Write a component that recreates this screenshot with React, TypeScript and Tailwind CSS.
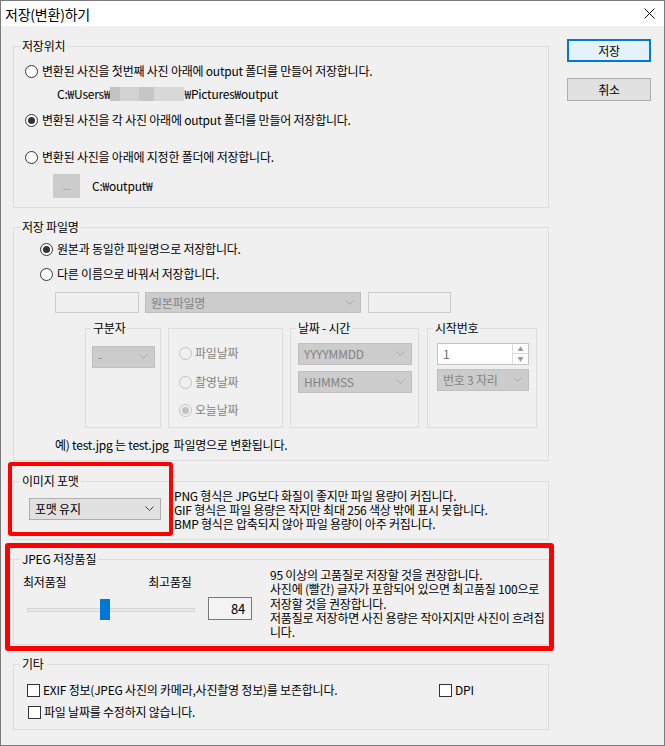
import type { ReactNode } from "react";

type RadioProps = { checked?: boolean; disabled?: boolean };

/** Win10 라디오 버튼 */
function Radio({ checked = false, disabled = false }: RadioProps) {
  return (
    <span
      className={
        disabled
          ? "flex size-[13px] shrink-0 items-center justify-center rounded-full border border-[#c2c2c2] bg-[#f0f0f0]"
          : "flex size-[13px] shrink-0 items-center justify-center rounded-full border border-[#333333] bg-white"
      }
    >
      {checked && (
        <span className={disabled ? "size-[7px] rounded-full bg-[#c2c2c2]" : "size-[7px] rounded-full bg-[#333333]"} />
      )}
    </span>
  );
}

function Checkbox() {
  return <span className="size-[13px] shrink-0 border border-[#333333] bg-white" />;
}

function Chevron({ dark = false }: { dark?: boolean }) {
  return (
    <svg width="9" height="6" viewBox="0 0 9 6" fill="none">
      <polyline points="0.5,0.5 4.5,4.5 8.5,0.5" stroke={dark ? "#3c3c3c" : "#a8a8a8"} strokeWidth="1" />
    </svg>
  );
}

function Select({ label, className = "", enabled = false }: { label: string; className?: string; enabled?: boolean }) {
  return (
    <div
      className={
        (enabled
          ? "flex h-[22px] items-center justify-between border border-[#adadad] bg-[#e1e1e1] pl-[5px] pr-[6px] text-black "
          : "flex h-[22px] items-center justify-between border border-[#bfbfbf] bg-[#cccccc] pl-[5px] pr-[6px] text-[#838383] ") +
        className
      }
    >
      <span>{label}</span>
      <Chevron dark={enabled} />
    </div>
  );
}

function Group({ title, className = "", children }: { title?: string; className?: string; children: ReactNode }) {
  return (
    <fieldset className={"border border-[#dcdcdc] " + className}>
      {title && <legend className="ml-[6px] px-[2px] leading-[16px]">{title}</legend>}
      {children}
    </fieldset>
  );
}

function SubGroup({ title, className = "", children }: { title?: string; className?: string; children: ReactNode }) {
  return (
    <fieldset className={"border border-[#dcdcdc] " + className}>
      {title && <legend className="ml-[5px] px-[2px] leading-[16px]">{title}</legend>}
      {children}
    </fieldset>
  );
}

/** 사용자명 모자이크 처리 */
function Mosaic() {
  return (
    <span className="flex h-[14px] w-[74px]">
      <span className="w-[10px] bg-[#c3c3c3]" />
      <span className="w-[19px] bg-[#d2d2d2]" />
      <span className="w-[15px] bg-[#c6c6c6]" />
      <span className="w-[30px] bg-[#d8d8d8]" />
    </span>
  );
}

export default function App() {
  return (
    <div className="relative flex h-[746px] w-[665px] flex-col overflow-hidden border border-[#7a7a7a] bg-[#f0f0f0] font-['Noto_Sans_CJK_KR',sans-serif] text-[12px] leading-[16px] tracking-[-0.22px] text-black">
      {/* 타이틀 바 */}
      <div className="flex h-[25px] shrink-0 items-center justify-between bg-white pl-[4px] pr-[9px]">
        <span className="text-[14px]">저장(변환)하기</span>
        <svg width="11" height="11" viewBox="0 0 11 11">
          <path d="M0.5 0.5 L10.5 10.5 M10.5 0.5 L0.5 10.5" stroke="#111" strokeWidth="1" />
        </svg>
      </div>

      <div className="flex">
        <div className="ml-[12px] mt-[12px] flex w-[536px] flex-col">
          {/* 저장위치 */}
          <Group title="저장위치">
            <div className="flex flex-col pb-[9px]">
              <label className="ml-[11px] mt-[9px] flex h-[16px] items-center gap-[4px]">
                <Radio />
                변환된 사진을 첫번째 사진 아래에 output 폴더를 만들어 저장합니다.
              </label>
              <div className="ml-[43px] mt-[7px] flex h-[16px] items-center">
                C:₩Users₩
                <Mosaic />
                ₩Pictures₩output
              </div>
              <label className="ml-[11px] mt-[10px] flex h-[16px] items-center gap-[4px]">
                <Radio checked />
                변환된 사진을 각 사진 아래에 output 폴더를 만들어 저장합니다.
              </label>
              <label className="ml-[11px] mt-[21px] flex h-[16px] items-center gap-[4px]">
                <Radio />
                변환된 사진을 아래에 지정한 폴더에 저장합니다.
              </label>
              <div className="ml-[39px] mt-[9px] flex h-[24px] items-center">
                <div className="flex h-[24px] w-[27px] items-center justify-center bg-[#cccccc] text-[10px] text-[#8c8c8c]">
                  ...
                </div>
                <span className="ml-[12px]">C:₩output₩</span>
              </div>
            </div>
          </Group>

          {/* 저장 파일명 */}
          <Group title="저장 파일명" className="mt-[11px]">
            <div className="flex flex-col pb-[7px]">
              <label className="ml-[26px] mt-[6px] flex h-[16px] items-center gap-[4px]">
                <Radio checked />
                원본과 동일한 파일명으로 저장합니다.
              </label>
              <label className="ml-[26px] mt-[9px] flex h-[16px] items-center gap-[4px]">
                <Radio />
                다른 이름으로 바꿔서 저장합니다.
              </label>
              <div className="ml-[41px] mt-[10px] flex h-[21px]">
                <div className="h-[21px] w-[84px] border border-[#cccccc] bg-[#f0f0f0]" />
                <Select label="원본파일명" className="ml-[6px] !h-[21px] w-[216px]" />
                <div className="ml-[7px] h-[21px] w-[83px] border border-[#cccccc] bg-[#f0f0f0]" />
              </div>

              <div className="ml-[71px] mt-[7px] flex h-[108px]">
                <SubGroup title="구분자" className="w-[76px]">
                  <Select label="-" className="ml-[6px] mt-[10px] w-[63px]" />
                </SubGroup>
                <SubGroup className="ml-[7px] mt-[8px] w-[115px]">
                  <div className="flex flex-col pl-[10px] text-[#838383]">
                    <span className="mt-[16px] flex h-[16px] items-center gap-[3px]">
                      <Radio disabled />
                      파일날짜
                    </span>
                    <span className="mt-[13px] flex h-[16px] items-center gap-[3px]">
                      <Radio disabled />
                      촬영날짜
                    </span>
                    <span className="mt-[12px] flex h-[16px] items-center gap-[3px]">
                      <Radio disabled checked />
                      오늘날짜
                    </span>
                  </div>
                </SubGroup>
                <SubGroup title="날짜 - 시간" className="ml-[7px] w-[129px]">
                  <Select label="YYYYMMDD" className="ml-[7px] mt-[7px] w-[114px]" />
                  <Select label="HHMMSS" className="ml-[7px] mt-[6px] w-[114px]" />
                </SubGroup>
                <SubGroup title="시작번호" className="ml-[8px] w-[110px]">
                  <div className="ml-[9px] mt-[7px] flex h-[22px] w-[92px] border border-[#c4c4c4] bg-white">
                    <span className="flex-1 pl-[5px] leading-[20px] text-[#6d6d6d]">1</span>
                    <div className="flex w-[16px] flex-col border-l border-[#dadada]">
                      <span className="flex h-[10px] items-center justify-center border-b border-[#dadada] text-[6px] leading-none text-[#9a9a9a]">
                        ▲
                      </span>
                      <span className="flex flex-1 items-center justify-center text-[6px] leading-none text-[#9a9a9a]">
                        ▼
                      </span>
                    </div>
                  </div>
                  <Select label="번호 3 자리" className="ml-[9px] mt-[4px] w-[92px]" />
                </SubGroup>
              </div>

              <p className="ml-[41px] mt-[9px] h-[16px] whitespace-pre">예) test.jpg 는 test.jpg  파일명으로 변환됩니다.</p>
            </div>
          </Group>

          {/* 이미지 포맷 */}
          <Group title="이미지 포맷" className="mt-[12px]">
            <div className="flex items-start pb-[8px]">
              <Select enabled label="포맷 유지" className="ml-[15px] mt-[9px] w-[132px]" />
              <div className="ml-[13px] whitespace-nowrap leading-[14px]">
                <p>PNG 형식은 JPG보다 화질이 좋지만 파일 용량이 커집니다.</p>
                <p>GIF 형식은 파일 용량은 작지만 최대 256 색상 밖에 표시 못합니다.</p>
                <p>BMP 형식은 압축되지 않아 파일 용량이 아주 커집니다.</p>
              </div>
            </div>
          </Group>

          {/* JPEG 저장품질 */}
          <Group title="JPEG 저장품질" className="mt-[11px]">
            <div className="flex items-start pb-[5px]">
              <div className="ml-[9px] flex w-[177px] shrink-0 flex-col">
                <div className="mt-[7px] flex h-[16px]">
                  <span>최저품질</span>
                  <span className="ml-[82px]">최고품질</span>
                </div>
                <div className="relative ml-[4px] mt-[9px] h-[21px] w-[168px]">
                  <div className="absolute left-0 right-0 top-[9px] h-[4px] border border-[#d6d6d6] bg-[#e7eaea]" />
                  <div className="absolute left-[73px] top-0 h-[21px] w-[10px] bg-[#0078d7]" />
                </div>
              </div>
              <div className="ml-[8px] mt-[30px] h-[23px] w-[44px] shrink-0 border border-[#7a7a7a] bg-[#f3f3f3] pr-[6px] text-right text-[13px] leading-[21px]">
                84
              </div>
              <div className="ml-[18px] mt-[1px] whitespace-nowrap leading-[14.25px]">
                <p>95 이상의 고품질로 저장할 것을 권장합니다.</p>
                <p>사진에 (빨간) 글자가 포함되어 있으면 최고품질 100으로</p>
                <p>저장할 것을 권장합니다.</p>
                <p>저품질로 저장하면 사진 용량은 작아지지만 사진이 흐려집</p>
                <p>니다.</p>
              </div>
            </div>
          </Group>

          {/* 기타 */}
          <Group title="기타" className="mt-[11px]">
            <div className="flex flex-col pb-[9px]">
              <div className="mt-[10px] flex h-[16px] items-center">
                <label className="ml-[13px] flex w-[412px] items-center gap-[3px]">
                  <Checkbox />
                  EXIF 정보(JPEG 사진의 카메라,사진촬영 정보)를 보존합니다.
                </label>
                <label className="flex items-center gap-[3px]">
                  <Checkbox />
                  DPI
                </label>
              </div>
              <label className="ml-[14px] mt-[6px] flex h-[16px] items-center gap-[3px]">
                <Checkbox />
                파일 날짜를 수정하지 않습니다.
              </label>
            </div>
          </Group>
        </div>

        {/* 버튼 */}
        <div className="ml-[18px] mt-[13px] flex w-[84px] flex-col">
          <button className="h-[23px] border-2 border-[#0078d7] bg-[#e5f1fb] text-[12px]">저장</button>
          <button className="mt-[16px] h-[23px] border border-[#adadad] bg-[#e1e1e1] text-[12px]">취소</button>
        </div>
      </div>

      {/* 빨간 강조 표시 */}
      <div className="pointer-events-none absolute left-[7px] top-[461px] h-[74px] w-[165px] rounded-[3px] border-4 border-[#fe0000]" />
      <div className="pointer-events-none absolute left-[4px] top-[542px] h-[108px] w-[549px] rounded-[3px] border-[5px] border-[#fe0000]" />
    </div>
  );
}
